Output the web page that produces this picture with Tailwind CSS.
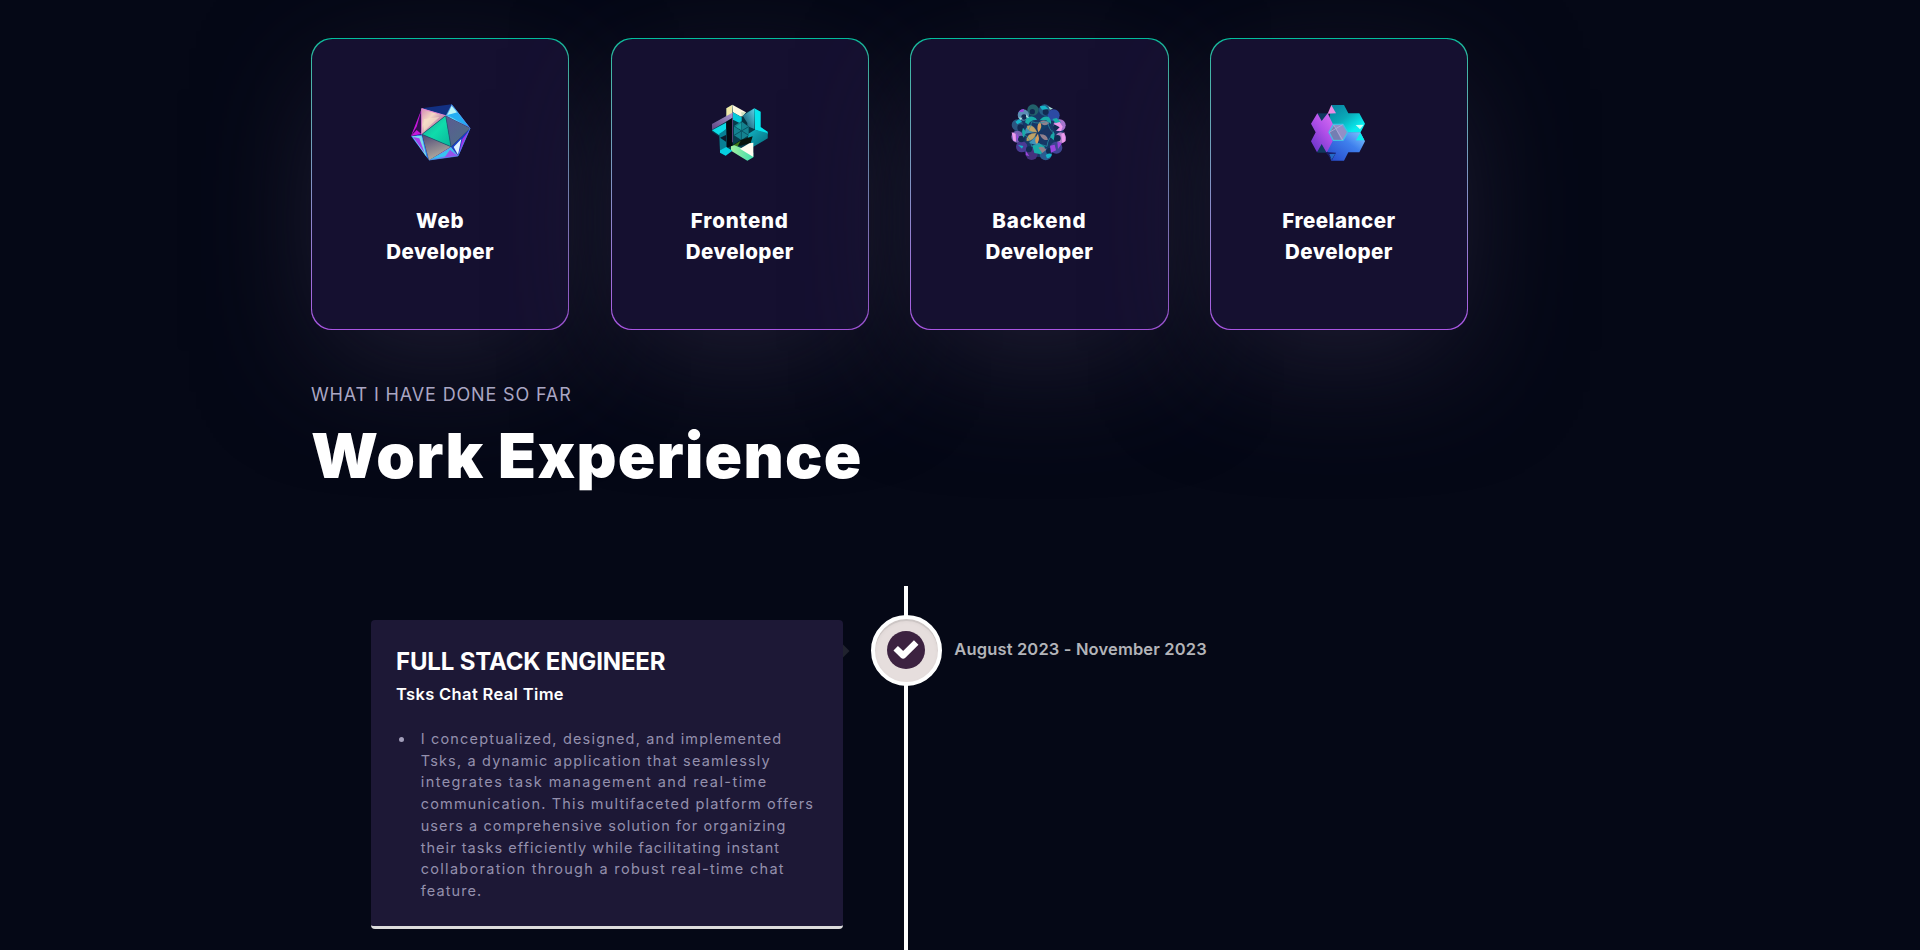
<!DOCTYPE html>
<html lang="en">
<head>
<meta charset="utf-8">
<title>Portfolio</title>
<script src="https://cdn.jsdelivr.net/npm/@tailwindcss/browser@4"></script>
</head>
<body class="bg-[#050816] font-['Inter',sans-serif] text-white">
<main class="h-[950px] w-full overflow-hidden">
  <section class="flex gap-[41.2px] pt-[38px] pl-[311px]">
    <div class="h-[292px] w-[258.4px] rounded-[20.6px] bg-linear-to-b from-[#00bf9d] to-[#a955e3] p-px shadow-[0px_36px_124px_-15px_#211e35]">
      <div class="flex h-full flex-col items-center rounded-[20.6px] bg-[#151030] pt-14">
        <svg class="h-[75px] w-20" viewBox="0 0 240 225">
          <defs>
            <linearGradient id="a1" x1="0" y1="0" x2="1" y2="1"><stop offset="0" stop-color="#d48bb4"/><stop offset=".35" stop-color="#f5d8c4"/><stop offset=".6" stop-color="#c58cae"/><stop offset="1" stop-color="#6c4a6e"/></linearGradient>
            <linearGradient id="a2" x1="0" y1="0" x2="1" y2="1"><stop offset="0" stop-color="#1a9d97"/><stop offset=".5" stop-color="#0fdcab"/><stop offset="1" stop-color="#0bb39a"/></linearGradient>
            <linearGradient id="a3" x1="0" y1="0" x2="1" y2="1"><stop offset="0" stop-color="#5b5a93"/><stop offset="1" stop-color="#4b7183"/></linearGradient>
            <linearGradient id="a4" x1="0" y1="0" x2=".4" y2="1"><stop offset="0" stop-color="#4a4576"/><stop offset="1" stop-color="#b4ae9f"/></linearGradient>
            <linearGradient id="a5" x1="0" y1="0" x2="1" y2="1"><stop offset="0" stop-color="#3c6fe0"/><stop offset=".45" stop-color="#59d9f8"/><stop offset="1" stop-color="#5536d6"/></linearGradient>
            <linearGradient id="a6" x1="0" y1="1" x2="1" y2="0"><stop offset="0" stop-color="#2ba5ee"/><stop offset=".5" stop-color="#a75af5"/><stop offset="1" stop-color="#33c1fb"/></linearGradient>
          </defs>
          <path fill="#123083" d="M65 40 155 28 137 62z"/><path fill="url(#a5)" d="M155 28 211 100 137 62z"/>
          <path fill="#b9f5f7" d="m155 32 19 24-32 4z"/><path fill="#24aef3" d="m143 60 29-8 35 44z"/>
          <path fill="#1640c5" d="M211 100 175 183 153 155z"/><path fill="#dff2ff" d="m184 132-10 47-13-23z"/><path fill="#a331e6" d="m208 106-32 73 11-47z"/>
          <path fill="url(#a6)" d="M175 183 87 196 153 155z"/><path fill="#38c4ef" d="m153 158 15 20-75 15z"/><path fill="#9654ec" d="m150 164 22 18-38 5z"/>
          <path fill="#2878ee" d="M87 196 33 123 66 118z"/><path fill="#7cdbe9" d="m36 124 29-2 15 65z"/><path fill="#9e42ef" d="m39 126 19 4 16 44z"/>
          <path fill="#33104f" d="M33 123 65 40 66 118z"/><path fill="#c517da" d="M33 123 65 42 50 95z M33 123l17-18 14 12z"/>
          <path fill="url(#a1)" d="M65 40 137 62 66 118z"/><path fill="#f6dfc8" d="m72 72 46-6-46 42z" opacity=".7"/>
          <path fill="url(#a3)" d="M137 62 211 100 153 155z"/><path fill="url(#a4)" d="M66 118 153 155 87 196z"/>
          <path fill="url(#a2)" stroke="#214b70" stroke-width="2" d="M137 62 66 118 153 155z"/>
          <path fill="none" stroke="#e287d5" stroke-width="3" d="m65 118V41l72 21"/><path fill="none" stroke="#4f95f5" stroke-width="2" d="m155 29 55 71-36 83-87 12"/>
        </svg>
        <h3 class="mt-[35px] text-center text-[20.5px] leading-[31px] font-extrabold"><span class="tracking-[0.8px]">Web</span><br><span class="tracking-[0.45px]">Developer</span></h3>
      </div>
    </div>
    <div class="h-[292px] w-[258.4px] rounded-[20.6px] bg-linear-to-b from-[#00bf9d] to-[#a955e3] p-px shadow-[0px_36px_124px_-15px_#211e35]">
      <div class="flex h-full flex-col items-center rounded-[20.6px] bg-[#151030] pt-14">
        <svg class="h-[75px] w-20" viewBox="0 0 240 225">
          <defs>
            <linearGradient id="b2" x1="0" y1="1" x2="1" y2="0"><stop offset="0" stop-color="#5d4480"/><stop offset="1" stop-color="#ab98cf"/></linearGradient>
            <linearGradient id="b3" x1="0" y1="0" x2="1" y2="1"><stop offset="0" stop-color="#12b4c4"/><stop offset="1" stop-color="#066a7c"/></linearGradient>
            <linearGradient id="b4"><stop offset="0" stop-color="#a3efa0"/><stop offset="1" stop-color="#3ddfae"/></linearGradient>
            <linearGradient id="b5" x1="1" y1="0" x2="0" y2="1"><stop offset="0" stop-color="#5fd0e6"/><stop offset="1" stop-color="#0b4a60"/></linearGradient>
          </defs>
          <path fill="#073c4c" d="M97 29 79 40v24L36 87v23l22 15 2 48 17 9 20-15 45 30 18-10v-32l43-25v-20l-21-13V50l-19-10-35 18z"/>
          <path fill="#f1e9a8" d="m79 40 18-11v27l-18 9z"/><path fill="#fdf9e0" d="m97 29 41 23-15 13-24-13z"/><path fill="#cfe2c0" d="m123 52 15 0-12 14z"/>
          <path fill="url(#b2)" d="m36 87 61-34v16L36 104z"/><path fill="#8a7ac0" d="m97 53 4-1v22l-4 2z"/>
          <path fill="#0ddbe6" d="m36 106 42-23v20l-20 18z"/><path fill="#087f94" d="m58 116 22-14v56l-20 8z"/><path fill="#0b1a2c" d="m60 128 18-8v20z"/>
          <path fill="#04c9d9" d="m99 52 26 15v20l-26-13z"/>
          <path fill="url(#b5)" d="m128 62 35-22v62l-20-8z"/><path fill="#063341" d="m128 62 14 22v22l-18-17z"/>
          <path fill="#05e6ef" d="m163 40 19 10v46l21 14v8l-38-14z"/>
          <path fill="url(#b3)" d="m143 118 22-14 38 10v16l-43 25-14-14z"/>
          <path fill="#05070f" d="M79 80 98 68v84l-18 6z"/><path fill="#5c3f78" d="M96 70h3v72h-3z"/>
          <path fill="#148390" d="m102 93 22-14 22 16v26l-22 14-22-14z"/><path fill="none" stroke="#095565" stroke-width="3" d="m102 93 44 28m0-26-44 26m22-42v56"/><path fill="#1ba0a2" d="m107 95 17-12v22z"/>
          <path fill="#08140c" d="m99 150 25-16 34-10-6 20-30 8z"/><path fill="#3f7a1d" d="m98 152 24-15-10 19z"/>
          <path fill="url(#b4)" d="m93 154 10-3 57 22v14l-18 10-49-30z"/><path fill="#fffdf0" d="m120 161 28-16 12-2v43z"/>
          <path fill="#06cfe0" d="m60 166 19-10 18 11-20 15-17-9z"/>
        </svg>
        <h3 class="mt-[35px] text-center text-[20.5px] leading-[31px] font-extrabold"><span class="tracking-[0.8px]">Frontend</span><br><span class="tracking-[0.45px]">Developer</span></h3>
      </div>
    </div>
    <div class="h-[292px] w-[258.4px] rounded-[20.6px] bg-linear-to-b from-[#00bf9d] to-[#a955e3] p-px shadow-[0px_36px_124px_-15px_#211e35]">
      <div class="flex h-full flex-col items-center rounded-[20.6px] bg-[#151030] pt-14">
        <svg class="h-[75px] w-20" viewBox="0 0 240 225">
          <circle cx="120" cy="112" r="74" fill="#173767"/>
          <circle cx="102" cy="45" r="17" fill="#22606a"/><circle cx="137" cy="45" r="17" fill="#245e86"/><circle cx="73" cy="60" r="17" fill="#5a8fb4"/><circle cx="164" cy="61" r="18" fill="#2c4aa4"/><circle cx="55" cy="90" r="17" fill="#2b5580"/><circle cx="182" cy="91" r="18" fill="#a474cc"/><circle cx="55" cy="125" r="18" fill="#7560b0"/><circle cx="185" cy="128" r="16" fill="#b080c8"/><circle cx="68" cy="155" r="17" fill="#4a3a94"/><circle cx="172" cy="158" r="18" fill="#3f4593"/><circle cx="98" cy="177" r="18" fill="#45307d"/><circle cx="140" cy="178" r="18" fill="#2a5c90"/>
          <g fill="#122a52"><circle cx="100" cy="50" r="8"/><circle cx="140" cy="51" r="9"/><circle cx="75" cy="66" r="8"/><circle cx="65" cy="98" r="10"/><circle cx="173" cy="96" r="10"/><circle cx="175" cy="130" r="10"/><circle cx="67" cy="132" r="10"/><circle cx="90" cy="163" r="9"/><circle cx="150" cy="168" r="9"/></g>
          <path fill="#18aca9" d="M78 82q4-20 24-17 10 2 12 10-20-2-26 14zM122 76q10-15 26-11 10 8 8 22-12-14-34-11zM160 72l13-3 13 13-14 5zM74 128q-8-12-2-30l10 14zM160 104q10 13 4 32l-10-10zM100 152l20-8 18 12-12 22-20-4z"/>
          <path fill="#15b4c9" d="M49 80l12-8 8 8-14 8zM140 180q10-9 19-1-5 10-15 11zM57 150l12 11 4-8zM122 34l16-2 10 10-19 2z"/>
          <path fill="#12406a" d="M120 110q-4-36 22-34 19 16-22 34zM118 120q6 35-16 28-17-13 16-28z"/><path fill="#1c3562" d="M124 114q30-28 38-5 1 20-38 5z"/>
          <path fill="#3f92ba" d="M78 116q-2-21 18-26l18 20zM90 144l20-20 10 28z"/>
          <path fill="#bfa166" stroke="#8c8160" stroke-width="1" d="M114 112q-32-1-30-19 20-7 30 19zM112 114q-8 25-29 24-1-24 29-24z"/>
          <path fill="#d59d5d" d="M118 112q-8-20 5-32 10 14-5 32zM117 116q-13 16-6 30 14-5 6-30z"/>
          <path fill="#92808c" d="M123 80q15-8 28 4-11 11-22 4zM122 118q21-1 25 16-15 6-25-16zM118 158q12-8 24 6l-12 10z"/>
          <path fill="#ed9aed" d="M163 86l19-5 9 14-5 13-15-1 11-10zM187 118l9-6 4 26-10 7zM38 112l12 4 1 24-8-3z"/>
          <path fill="#9b45df" d="M153 152l14-3 4 17-15 7zM59 50q7-9 16-8l-2 9zM52 112l7 14-5 14zM80 167l11 16-11-2zM175 140l14 5-12 17z"/>
          <path fill="#a7dfdc" d="M56 64q6 6 15 4l-6 7zM82 57l8 12-9-2zM148 34l14 7-9 3z"/>
          <path fill="none" stroke="#2b9aac" stroke-width="2" d="M76 118q17-10 22-38 24 9 48-2 2 26 21 39-20 9-23 37-24-10-46 0-4-24-22-36z"/>
        </svg>
        <h3 class="mt-[35px] text-center text-[20.5px] leading-[31px] font-extrabold"><span class="tracking-[0.9px]">Backend</span><br><span class="tracking-[0.45px]">Developer</span></h3>
      </div>
    </div>
    <div class="h-[292px] w-[258.4px] rounded-[20.6px] bg-linear-to-b from-[#00bf9d] to-[#a955e3] p-px shadow-[0px_36px_124px_-15px_#211e35]">
      <div class="flex h-full flex-col items-center rounded-[20.6px] bg-[#151030] pt-14">
        <svg class="h-[75px] w-20" viewBox="0 0 240 225">
          <defs>
            <linearGradient id="d1" x1="0" y1="0" x2="1" y2="1"><stop offset="0" stop-color="#087c9e"/><stop offset=".45" stop-color="#0aa9b8"/><stop offset=".8" stop-color="#08ecef"/></linearGradient>
            <linearGradient id="d2" x1="1" y1="0" x2="0" y2="1"><stop offset="0" stop-color="#84caff"/><stop offset=".4" stop-color="#3f80ed"/><stop offset="1" stop-color="#2446c8"/></linearGradient>
            <linearGradient id="d3" x1="1" y1="0" x2=".3" y2="1"><stop offset="0" stop-color="#da70f4"/><stop offset=".5" stop-color="#b04fe8"/><stop offset="1" stop-color="#7037cc"/></linearGradient>
          </defs>
          <path fill="#10395f" d="M55 55h34v118H55z"/>
          <path fill="url(#d1)" d="M97 30h38l13 25h33l17 31-14 27h-70L89 84z"/>
          <path fill="url(#d2)" d="M92 112h92l14 27-17 33h-33l-13 25H97l-14-32z"/>
          <path fill="url(#d3)" d="M36 86 55 55l13 23L86 55l17 35-10 22 8 26-18 35-15-26-14 25-18-33 14-27z"/>
          <path fill="#ec8ce5" d="M97 30l14 25-25 1z"/><path fill="#181b65" d="m79 171 32 2-12 22z"/><path fill="#246ac5" d="m91 177 18-1-11 18z"/>
          <path fill="#c9fff5" d="m170 90 24-1-11 14z"/><path fill="#08f0ed" d="m184 113 12 23h-25z"/>
          <path fill="#928fc7" stroke="#43bee5" stroke-width="4" d="m103 88h29l14 24-14 24h-29L90 112z"/><path fill="#747eb2" d="m106 92 20 42h-22l-11-22z"/><path stroke="#b9b3dd" stroke-width="2" d="m104 90 27 45m-40-23 40-23"/>
        </svg>
        <h3 class="mt-[35px] text-center text-[20.5px] leading-[31px] font-extrabold"><span class="tracking-[0.5px]">Freelancer</span><br><span class="tracking-[0.45px]">Developer</span></h3>
      </div>
    </div>
  </section>

  <header class="pt-[47.4px] pl-[311px]">
    <p class="text-[18px] leading-[36px] tracking-[0.85px] text-[#aaa6c3]">WHAT I HAVE DONE SO FAR</p>
    <h2 class="mt-[2.6px] text-[62px] leading-[80px] font-black tracking-[1.3px]">Work Experience</h2>
  </header>

  <section class="mt-[90px] flex items-start pl-[371px]">
    <article class="relative mt-[34px] h-[309.5px] w-[471.5px] rounded-[4px] border-b-[3px] border-[#dcdcdc] bg-[#1d1836] pt-[24px] pl-[25px]">
      <div class="absolute top-6 left-full h-[14px] w-[7px] bg-[#20222e] [clip-path:polygon(0_0,100%_50%,0_100%)]"></div>
      <h3 class="text-[24px] leading-[36px] font-bold tracking-[-0.17px]">FULL STACK ENGINEER</h3>
      <p class="text-[16.5px] leading-[28px] font-semibold tracking-[0.35px]">Tsks Chat Real Time</p>
      <ul class="mt-[20px] pl-[24.7px] text-[14.5px] leading-[21.7px] whitespace-nowrap text-[#9490ad]">
        <li class="relative before:absolute before:top-[9px] before:left-[-21.5px] before:size-[5px] before:rounded-full before:bg-[#a29eba]"><span class="tracking-[1.18px]">I conceptualized, designed, and implemented</span><br><span class="tracking-[1.17px]">Tsks, a dynamic application that seamlessly</span><br><span class="tracking-[1.43px]">integrates task management and real-time</span><br><span class="tracking-[1.18px]">communication. This multifaceted platform offers</span><br><span class="tracking-[1.09px]">users a comprehensive solution for organizing</span><br><span class="tracking-[1.04px]">their tasks efficiently while facilitating instant</span><br><span class="tracking-[1.3px]">collaboration through a robust real-time chat</span><br><span class="tracking-[1.1px]">feature.</span></li>
      </ul>
    </article>
    <div class="relative ml-[28px] h-[400px] w-[71px]">
      <div class="mx-auto h-full w-1 bg-white"></div>
      <div class="absolute top-[29px] left-0 flex size-[71px] items-center justify-center rounded-full border-4 border-white bg-[#e6dedd] shadow-[inset_0_2px_0_rgba(0,0,0,0.08),inset_0_2px_4px_rgba(0,0,0,0.05)]">
        <svg class="size-[38px]" viewBox="0 0 38 38"><circle cx="19" cy="19" r="19" fill="#3c2240"/><path fill="none" stroke="#fff" stroke-width="6.4" stroke-linejoin="round" d="m8.7 17.2 7.4 7.2L29.2 11.4"/></svg>
      </div>
    </div>
    <p class="mt-[51.5px] ml-[12.8px] text-[16.5px] leading-[24px] font-semibold tracking-[0.15px] text-[#b3b4b9]">August 2023 - November 2023</p>
  </section>
</main>
</body>
</html>
